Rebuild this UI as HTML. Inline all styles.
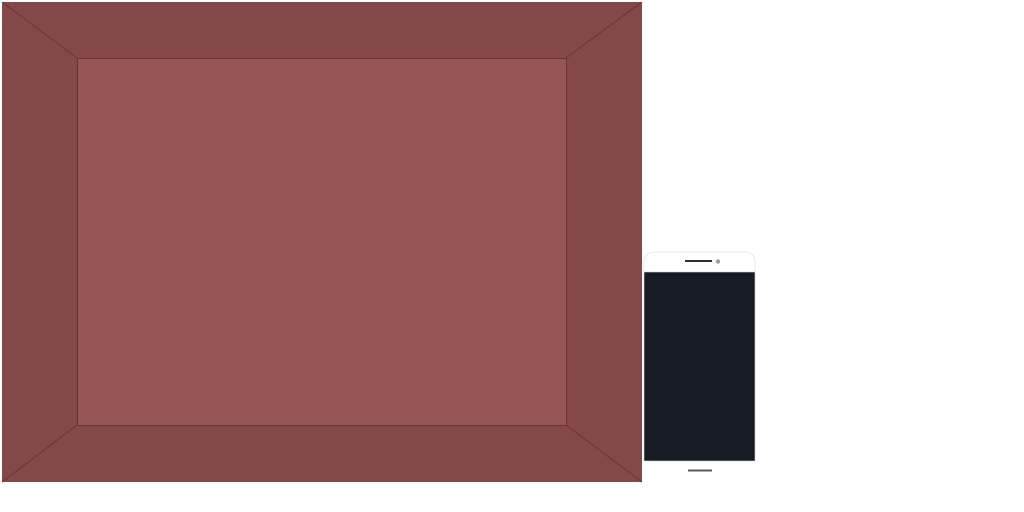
<!DOCTYPE html><html><head><style>body{margin:0;width:1024px;height:512px;background:#fff;position:relative;overflow:hidden}</style></head><body>
<svg width="1024" height="512" style="position:absolute;left:0;top:0">
<rect x="2" y="2" width="640" height="480" fill="#844848"/>
<g stroke="#6a3434" stroke-width="1">
<line x1="2" y1="2" x2="77" y2="58"/><line x1="642" y1="2" x2="566" y2="58"/>
<line x1="2" y1="482" x2="77" y2="425"/><line x1="642" y1="482" x2="566" y2="425"/>
</g>
<rect x="77.5" y="58.5" width="489" height="367" fill="#965555" stroke="#6a3434"/>
<path d="M644 272 V262 Q644 252 656 252 H744 Q755 252 755 262 V272" fill="#fff" stroke="#cdeee6" stroke-width="0.8"/>
<rect x="644" y="272" width="111" height="189" fill="#171b23" stroke="#d0d4d8" stroke-width="0.6"/>
<rect x="685" y="260" width="27" height="2" fill="#2a2e36"/>
<circle cx="718" cy="261.5" r="2.2" fill="#9a9ea4"/>
<rect x="688" y="469.5" width="24" height="2" fill="#555a60"/>
</svg>
</body></html>
